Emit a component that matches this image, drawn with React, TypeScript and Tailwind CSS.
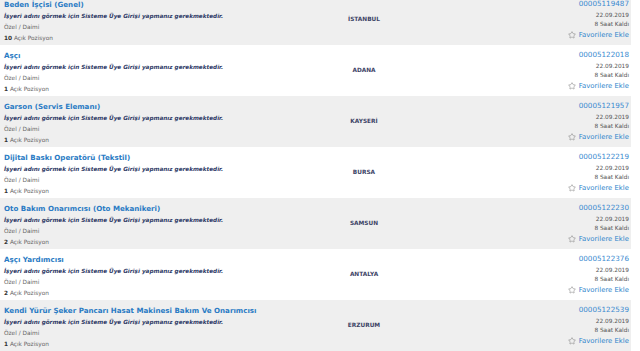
import { Star } from "lucide-react";

type Job = {
  title: string;
  city: string;
  id: string;
  count: number;
};

const jobs: Job[] = [
  { title: "Beden İşçisi (Genel)", city: "İSTANBUL", id: "00005119487", count: 10 },
  { title: "Aşçı", city: "ADANA", id: "00005122018", count: 1 },
  { title: "Garson (Servis Elemanı)", city: "KAYSERİ", id: "00005121957", count: 1 },
  { title: "Dijital Baskı Operatörü (Tekstil)", city: "BURSA", id: "00005122219", count: 1 },
  { title: "Oto Bakım Onarımcısı (Oto Mekanikeri)", city: "SAMSUN", id: "00005122230", count: 2 },
  { title: "Aşçı Yardımcısı", city: "ANTALYA", id: "00005122376", count: 2 },
  {
    title: "Kendi Yürür Şeker Pancarı Hasat Makinesi Bakım Ve Onarımcısı",
    city: "ERZURUM",
    id: "00005122539",
    count: 1,
  },
];

const JobRow = ({ job, index }: { job: Job; index: number }) => {
  return (
    <div className={`flex h-[51px] ${index % 2 === 0 ? "bg-[#efefef]" : "bg-white"}`}>
      <div className="flex-1 pl-[4px] pt-[5px]">
        <a href="#" className="block h-[12px] text-[7.1px] leading-[12px] font-bold text-[#2a7bc4]">
          {job.title}
        </a>
        <p className="text-[5.7px] leading-[11px] font-bold italic text-[#2e3a66]">
          İşyeri adını görmek için Sisteme Üye Girişi yapmanız gerekmektedir.
        </p>
        <p className="text-[5.8px] leading-[11px] text-[#666]">Özel / Daimi</p>
        <p className="text-[5.8px] leading-[11px] text-[#666]">
          <span className="font-bold text-[#333]">{job.count}</span> Açık Pozisyon
        </p>
      </div>
      <div className="flex w-[130px] items-center justify-center text-[5.8px] font-bold text-[#3d4466]">
        {job.city}
      </div>
      <div className="flex w-[202px] flex-col items-end pr-[2px] pt-[4px]">
        <a href="#" className="text-[7.2px] leading-[12px] text-[#3a8ad0]">
          {job.id}
        </a>
        <span className="text-[5.8px] leading-[10px] text-[#555]">22.09.2019</span>
        <span className="text-[5.8px] leading-[9px] text-[#555]">8 Saat Kaldı</span>
        <a href="#" className="flex items-center gap-[3px] text-[6.9px] leading-[12px] text-[#2f86cc]">
          <Star size={8} strokeWidth={1.5} className="text-[#777]" />
          Favorilere Ekle
        </a>
      </div>
    </div>
  );
};

const App = () => {
  return (
    <div className="h-[351px] overflow-hidden bg-white font-['DejaVu_Sans',Verdana,sans-serif]">
      <div className="-mt-[6px] w-[631px]">
        {jobs.map((job, i) => (
          <JobRow key={job.id} job={job} index={i} />
        ))}
      </div>
    </div>
  );
};

export default App;
